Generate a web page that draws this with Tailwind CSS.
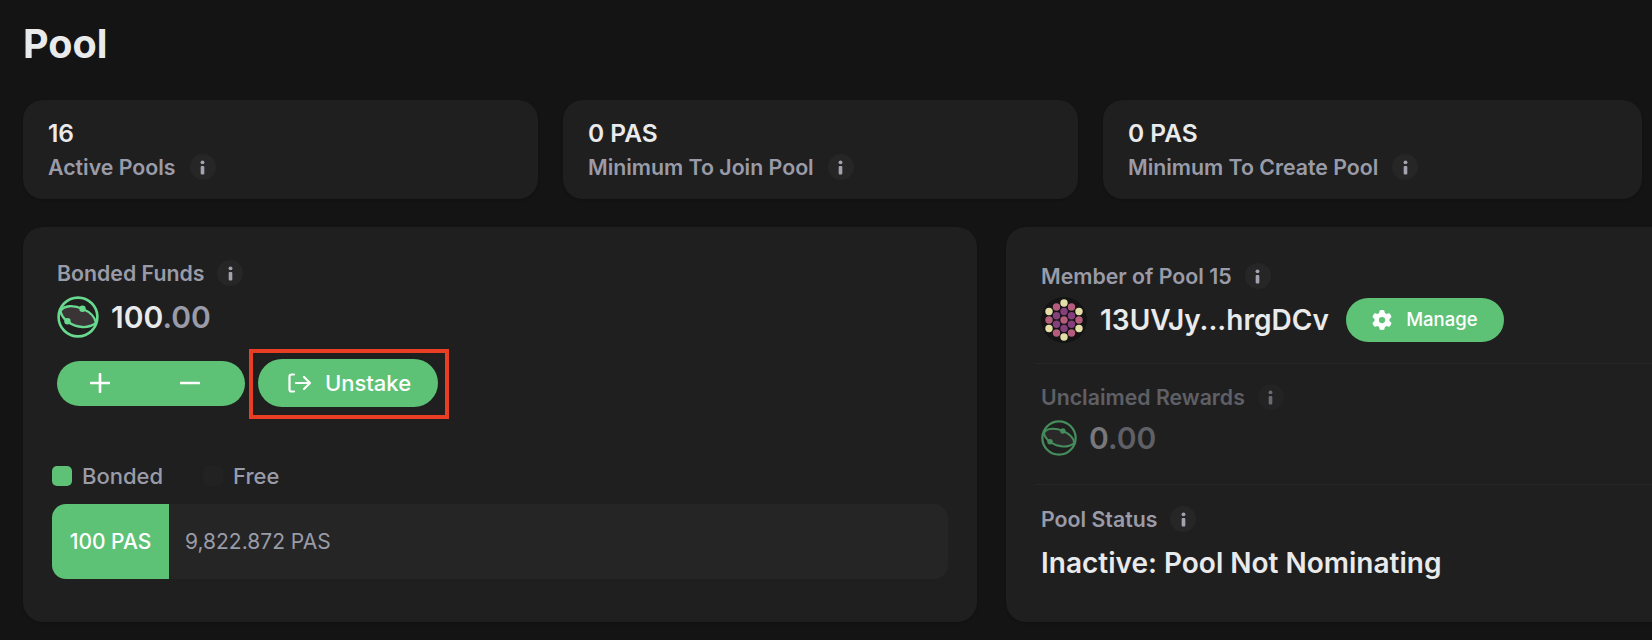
<!DOCTYPE html>
<html><head><meta charset="utf-8"><script src="https://cdn.jsdelivr.net/npm/@tailwindcss/browser@4"></script></head>
<body class="bg-[#141414]">
<div class="w-[1652px] h-[640px] overflow-hidden bg-[#141414] pl-[23px] font-['Inter',sans-serif] text-[#e9eaec]">
  <h1 class="h-[100px] pt-[20px] text-[39.5px] leading-[48px] font-bold">Pool</h1>

  <div class="flex gap-[25px]">
    <div class="w-[515px] h-[99px] shrink-0 rounded-[20px] bg-[#1f1f1f] pl-[25px] pt-[18px] shadow-sm">
      <div class="text-[24.5px] leading-[30px] font-semibold">16</div>
      <div class="mt-[5px] flex items-center gap-[14px] text-[21.3px] leading-[28px] font-semibold text-[#9a9ba8]">Active Pools
        <span class="flex h-[26px] w-[26px] items-center justify-center rounded-full bg-[#262626]"><svg width="7" height="15" viewBox="0 0 6 14"><circle cx="3" cy="2.2" r="1.8" fill="#a2a3ae"/><rect x="1.3" y="5.5" width="3.4" height="8" rx="1" fill="#a2a3ae"/></svg></span>
      </div>
    </div>
    <div class="w-[515px] h-[99px] shrink-0 rounded-[20px] bg-[#1f1f1f] pl-[25px] pt-[18px] shadow-sm">
      <div class="text-[24.5px] leading-[30px] font-semibold">0 PAS</div>
      <div class="mt-[5px] flex items-center gap-[14px] text-[21.3px] leading-[28px] font-semibold text-[#9a9ba8]">Minimum To Join Pool
        <span class="flex h-[26px] w-[26px] items-center justify-center rounded-full bg-[#262626]"><svg width="7" height="15" viewBox="0 0 6 14"><circle cx="3" cy="2.2" r="1.8" fill="#a2a3ae"/><rect x="1.3" y="5.5" width="3.4" height="8" rx="1" fill="#a2a3ae"/></svg></span>
      </div>
    </div>
    <div class="w-[539px] h-[99px] shrink-0 rounded-[20px] bg-[#1f1f1f] pl-[25px] pt-[18px] shadow-sm">
      <div class="text-[24.5px] leading-[30px] font-semibold">0 PAS</div>
      <div class="mt-[5px] flex items-center gap-[14px] text-[21.3px] leading-[28px] font-semibold text-[#9a9ba8]">Minimum To Create Pool
        <span class="flex h-[26px] w-[26px] items-center justify-center rounded-full bg-[#262626]"><svg width="7" height="15" viewBox="0 0 6 14"><circle cx="3" cy="2.2" r="1.8" fill="#a2a3ae"/><rect x="1.3" y="5.5" width="3.4" height="8" rx="1" fill="#a2a3ae"/></svg></span>
      </div>
    </div>
  </div>

  <div class="mt-[28px] flex gap-[29px]">
    <div class="w-[954px] h-[395px] shrink-0 rounded-[20px] bg-[#1f1f1f] pl-[34px] pr-[29px] pt-[32px] shadow-sm">
      <div class="flex items-center gap-[13px] text-[21.3px] leading-[28px] font-semibold text-[#9a9ba8]">Bonded Funds
        <span class="flex h-[26px] w-[26px] items-center justify-center rounded-full bg-[#262626]"><svg width="7" height="15" viewBox="0 0 6 14"><circle cx="3" cy="2.2" r="1.8" fill="#a2a3ae"/><rect x="1.3" y="5.5" width="3.4" height="8" rx="1" fill="#a2a3ae"/></svg></span>
      </div>
      <div class="mt-[8px] flex h-[44px] items-center gap-[12px]">
        <svg width="42" height="42" viewBox="0 0 42 42" fill="none"><circle cx="21" cy="21" r="19.4" fill="#1f1f1f" stroke="#68d98f" stroke-width="2.6"/><path d="M3.5 15C7 9 17 9 26 13C33 16 38 21 39 27C31 33 20 32 11 26C7 23 4 19 3.5 15Z" fill="#3a3436" stroke="#68d98f" stroke-width="2.3"/><circle cx="25.5" cy="12.7" r="3.2" fill="#68d98f"/><circle cx="10.5" cy="25.3" r="3.2" fill="#68d98f"/></svg>
        <div class="text-[30px] leading-[36px] font-semibold">100<span class="text-[#9a9ba8]">.00</span></div>
      </div>
      <div class="mt-[20px] flex items-center gap-[13px]">
        <div class="flex h-[45px] w-[188px] items-center rounded-full bg-[#5dc275] text-white">
          <span class="flex w-[86px] justify-center"><svg width="20" height="20" viewBox="0 0 20 20"><path d="M10 1V19M1 10H19" stroke="#fff" stroke-width="2.6" stroke-linecap="round"/></svg></span>
          <span class="flex w-[94px] justify-center"><svg width="20" height="20" viewBox="0 0 20 20"><path d="M1 10H19" stroke="#fff" stroke-width="2.6" stroke-linecap="round"/></svg></span>
        </div>
        <div class="flex h-[48px] w-[180px] items-center justify-center gap-[13px] rounded-full bg-[#5dc275] pl-[3px] text-[22px] font-medium text-white">
          <svg width="24" height="20" viewBox="0 0 24 20" fill="none" stroke="#fff" stroke-width="2.2" stroke-linecap="round" stroke-linejoin="round"><path d="M6 1.5H3.5A2 2 0 0 0 1.5 3.5V16.5A2 2 0 0 0 3.5 18.5H6"/><path d="M8 10H22M16 4L22 10L16 16"/></svg>
          Unstake
        </div>
      </div>
      <div class="mt-[55px] ml-[-5px] flex items-center text-[22px] leading-[28px] font-medium text-[#9a9ba8]">
        <span class="mr-[10px] h-[20px] w-[20px] rounded-[5px] bg-[#5dc275]"></span>Bonded
        <span class="ml-[40px] mr-[10px] h-[20px] w-[20px] rounded-[5px] bg-[#222222]"></span>Free
      </div>
      <div class="mt-[14px] ml-[-5px] flex h-[75px] overflow-hidden rounded-[14px] bg-[#252525] text-[21px]">
        <div class="flex w-[117px] items-center justify-center bg-[#5dc275] font-medium text-white">100 PAS</div>
        <div class="flex items-center pl-[16px] text-[#9a9ba8]">9,822.872 PAS</div>
      </div>
    </div>

    <div class="w-[700px] h-[395px] shrink-0 rounded-[20px] bg-[#1f1f1f] pt-[35px] shadow-sm">
      <div class="pl-[35px]">
        <div class="flex items-center gap-[13px] text-[21.3px] leading-[28px] font-semibold text-[#9a9ba8]">Member of Pool 15
          <span class="flex h-[26px] w-[26px] items-center justify-center rounded-full bg-[#262626]"><svg width="7" height="15" viewBox="0 0 6 14"><circle cx="3" cy="2.2" r="1.8" fill="#a2a3ae"/><rect x="1.3" y="5.5" width="3.4" height="8" rx="1" fill="#a2a3ae"/></svg></span>
        </div>
        <div class="mt-[6px] flex h-[48px] items-center">
          <svg width="46" height="46" viewBox="0 0 46 46"><circle cx="23" cy="23" r="23" fill="#141414"/>
            <g fill="#e3dfa6"><circle cx="23" cy="6" r="3.7"/><circle cx="8" cy="14.5" r="3.7"/><circle cx="38" cy="14.5" r="3.7"/><circle cx="8" cy="31.5" r="3.7"/><circle cx="38" cy="31.5" r="3.7"/><circle cx="23" cy="40" r="3.7"/></g>
            <g fill="#b55c7c"><circle cx="15.5" cy="10" r="3.7"/><circle cx="30.5" cy="10" r="3.7"/><circle cx="8" cy="23" r="3.7"/><circle cx="38" cy="23" r="3.7"/><circle cx="15.5" cy="36" r="3.7"/><circle cx="30.5" cy="36" r="3.7"/><circle cx="23" cy="23" r="3.7"/></g>
            <g fill="#83407a"><circle cx="23" cy="14.5" r="3.7"/><circle cx="15.5" cy="18.7" r="3.7"/><circle cx="30.5" cy="18.7" r="3.7"/><circle cx="15.5" cy="27.3" r="3.7"/><circle cx="30.5" cy="27.3" r="3.7"/><circle cx="23" cy="31.5" r="3.7"/></g>
          </svg>
          <span class="ml-[13px] text-[28px] font-semibold">13UVJy...hrgDCv</span>
          <div class="ml-[17px] flex h-[44px] w-[158px] items-center justify-center gap-[14px] rounded-full bg-[#5dc275] text-[18.5px] font-medium text-white">
            <svg width="20" height="20" viewBox="0 0 512 512" fill="#fff"><path d="M495.9 166.6c3.2 8.7.5 18.4-6.4 24.6l-43.3 39.4c1.1 8.3 1.7 16.8 1.7 25.4s-.6 17.1-1.7 25.4l43.3 39.4c6.9 6.2 9.6 15.9 6.4 24.6c-4.4 11.9-9.7 23.3-15.8 34.3l-4.7 8.1c-6.6 11-14 21.4-22.1 31.2c-5.9 7.2-15.7 9.6-24.5 6.8l-55.7-17.7c-13.4 10.3-28.2 18.9-44 25.4l-12.5 57.1c-2 9.1-9 16.3-18.2 17.8c-13.8 2.3-28 3.5-42.5 3.5s-28.7-1.2-42.5-3.5c-9.2-1.5-16.2-8.7-18.2-17.8l-12.5-57.1c-15.8-6.5-30.6-15.1-44-25.4L83.1 425.9c-8.8 2.8-18.6.3-24.5-6.8c-8.1-9.8-15.5-20.2-22.1-31.2l-4.7-8.1c-6.1-11-11.4-22.4-15.8-34.3c-3.2-8.7-.5-18.4 6.4-24.6l43.3-39.4C64.6 273.1 64 264.6 64 256s.6-17.1 1.7-25.4L22.4 191.2c-6.9-6.2-9.6-15.9-6.4-24.6c4.4-11.9 9.7-23.3 15.8-34.3l4.7-8.1c6.6-11 14-21.4 22.1-31.2c5.9-7.2 15.7-9.6 24.5-6.8l55.7 17.7c13.4-10.3 28.2-18.9 44-25.4l12.5-57.1c2-9.1 9-16.3 18.2-17.8C227.3 1.2 241.5 0 256 0s28.7 1.2 42.5 3.5c9.2 1.5 16.2 8.7 18.2 17.8l12.5 57.1c15.8 6.5 30.6 15.1 44 25.4l55.7-17.7c8.8-2.8 18.6-.3 24.5 6.8c8.1 9.8 15.5 20.2 22.1 31.2l4.7 8.1c6.1 11 11.4 22.4 15.8 34.3zM256 336a80 80 0 1 0 0-160a80 80 0 1 0 0 160z"/></svg>
            Manage
          </div>
        </div>
      </div>
      <div class="mt-[19px] ml-[30px] h-px bg-[#272727]"></div>
      <div class="pl-[35px] pt-[19px]">
        <div class="flex items-center gap-[13px] text-[21.3px] leading-[28px] font-semibold text-[#5f5f66]">Unclaimed Rewards
          <span class="flex h-[26px] w-[26px] items-center justify-center rounded-full bg-[#232323]"><svg width="7" height="15" viewBox="0 0 6 14"><circle cx="3" cy="2.2" r="1.8" fill="#6a6a72"/><rect x="1.3" y="5.5" width="3.4" height="8" rx="1" fill="#6a6a72"/></svg></span>
        </div>
        <div class="mt-[6px] flex h-[42px] items-center gap-[12px]">
          <svg width="36" height="36" viewBox="0 0 42 42" fill="none"><circle cx="21" cy="21" r="19.4" fill="#1f1f1f" stroke="#458d5c" stroke-width="2.6"/><path d="M3.5 15C7 9 17 9 26 13C33 16 38 21 39 27C31 33 20 32 11 26C7 23 4 19 3.5 15Z" fill="#2a2829" stroke="#458d5c" stroke-width="2.3"/><circle cx="25.5" cy="12.7" r="3.2" fill="#458d5c"/><circle cx="10.5" cy="25.3" r="3.2" fill="#458d5c"/></svg>
          <div class="text-[30px] leading-[36px] font-semibold text-[#77777c]">0<span class="text-[#5f5f66]">.00</span></div>
        </div>
      </div>
      <div class="mt-[25px] ml-[30px] h-px bg-[#272727]"></div>
      <div class="pl-[35px] pt-[20px]">
        <div class="flex items-center gap-[13px] text-[21.3px] leading-[28px] font-semibold text-[#9a9ba8]">Pool Status
          <span class="flex h-[26px] w-[26px] items-center justify-center rounded-full bg-[#262626]"><svg width="7" height="15" viewBox="0 0 6 14"><circle cx="3" cy="2.2" r="1.8" fill="#a2a3ae"/><rect x="1.3" y="5.5" width="3.4" height="8" rx="1" fill="#a2a3ae"/></svg></span>
        </div>
        <div class="mt-[12px] text-[28px] leading-[36px] font-semibold">Inactive: Pool Not Nominating</div>
      </div>
    </div>
  </div>
</div>
<div class="pointer-events-none absolute left-[249px] top-[349px] h-[70px] w-[200px] border-[4px] border-[#e93d24]"></div>
</body></html>
